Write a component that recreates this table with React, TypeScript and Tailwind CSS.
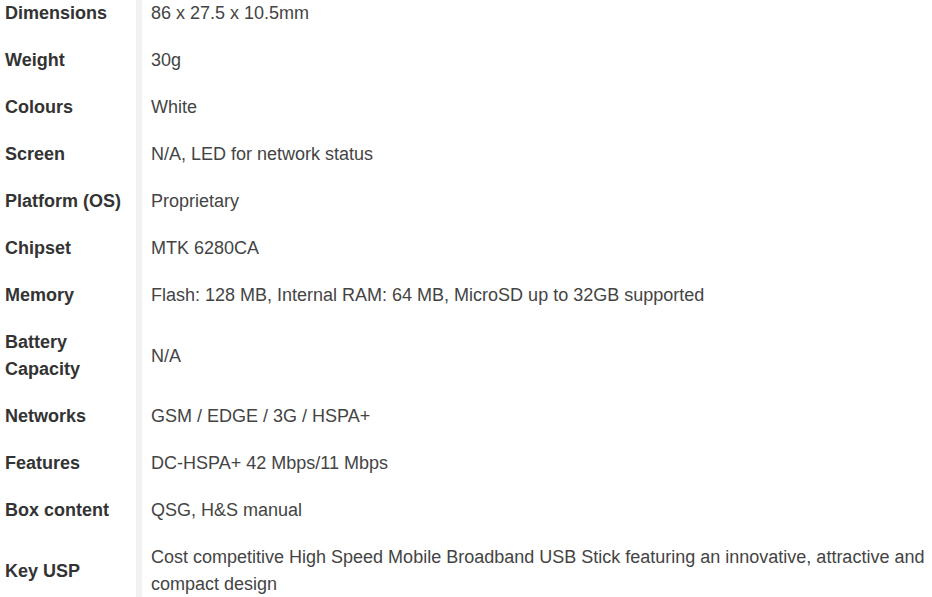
import React from "react";

const rows: [string, string][] = [
  ["Dimensions", "86 x 27.5 x 10.5mm"],
  ["Weight", "30g"],
  ["Colours", "White"],
  ["Screen", "N/A, LED for network status"],
  ["Platform (OS)", "Proprietary"],
  ["Chipset", "MTK 6280CA"],
  ["Memory", "Flash: 128 MB, Internal RAM: 64 MB, MicroSD up to 32GB supported"],
  ["Battery Capacity", "N/A"],
  ["Networks", "GSM / EDGE / 3G / HSPA+"],
  ["Features", "DC-HSPA+ 42 Mbps/11 Mbps"],
  ["Box content", "QSG, H&S manual"],
  [
    "Key USP",
    "Cost competitive High Speed Mobile Broadband USB Stick featuring an innovative, attractive and compact design",
  ],
];

export default function App() {
  return (
    <div
      className="w-[932px] h-[597px] overflow-hidden bg-white"
      style={{ fontFamily: '"Liberation Sans", Arial, sans-serif' }}
    >
      <div className="mt-[-10px] flex flex-col text-[18px] leading-[27px]">
        {rows.map(([k, v]) => (
          <div key={k} className="flex">
            <div className="w-[136px] shrink-0 pl-[5px] pr-2 py-[10px] font-bold text-[#333] flex items-center">
              {k}
            </div>
            <div className="w-[6px] shrink-0 bg-[#f1f1f1]" />
            <div className="flex-1 pl-[9px] pr-0 py-[10px] text-[#444] flex items-center">
              {v}
            </div>
          </div>
        ))}
      </div>
    </div>
  );
}
